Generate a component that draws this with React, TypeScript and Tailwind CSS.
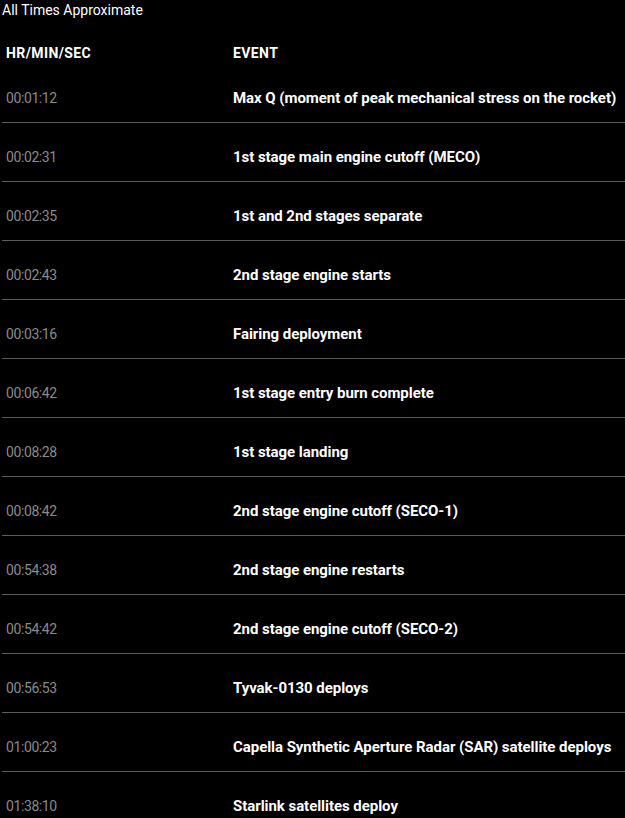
import React from "react";

const rows: [string, string][] = [
  ["00:01:12", "Max Q (moment of peak mechanical stress on the rocket)"],
  ["00:02:31", "1st stage main engine cutoff (MECO)"],
  ["00:02:35", "1st and 2nd stages separate"],
  ["00:02:43", "2nd stage engine starts"],
  ["00:03:16", "Fairing deployment"],
  ["00:06:42", "1st stage entry burn complete"],
  ["00:08:28", "1st stage landing"],
  ["00:08:42", "2nd stage engine cutoff (SECO-1)"],
  ["00:54:38", "2nd stage engine restarts"],
  ["00:54:42", "2nd stage engine cutoff (SECO-2)"],
  ["00:56:53", "Tyvak-0130 deploys"],
  ["01:00:23", "Capella Synthetic Aperture Radar (SAR) satellite deploys"],
  ["01:38:10", "Starlink satellites deploy"],
];

export default function App() {
  return (
    <div
      className="w-[625px] h-[818px] overflow-hidden bg-black text-white"
      style={{ fontFamily: "Roboto, 'Liberation Sans', sans-serif" }}
    >
      <div className="pl-[2px] pt-[1px] text-[14px] leading-[18px] text-white">
        All Times Approximate
      </div>
      <div className="flex pl-[6px] pt-[25px] pb-[2px] text-[14px] leading-[18px] font-bold tracking-[0.4px]">
        <div className="w-[227px]">HR/MIN/SEC</div>
        <div>EVENT</div>
      </div>
      <div className="ml-[2px]">
        {rows.map(([t, e], i) => (
          <div
            key={i}
            className={`flex items-start pl-[4px] pt-[25px] h-[59px] ${i < rows.length - 1 ? "border-b border-[#5a5a5a]" : ""}`}
          >
            <div className="w-[227px] text-[14px] leading-[18px] text-[#8a8a8a] tracking-[-0.4px]">{t}</div>
            <div className="text-[15px] leading-[18px] font-bold tracking-[-0.05px] whitespace-nowrap">{e}</div>
          </div>
        ))}
      </div>
    </div>
  );
}
